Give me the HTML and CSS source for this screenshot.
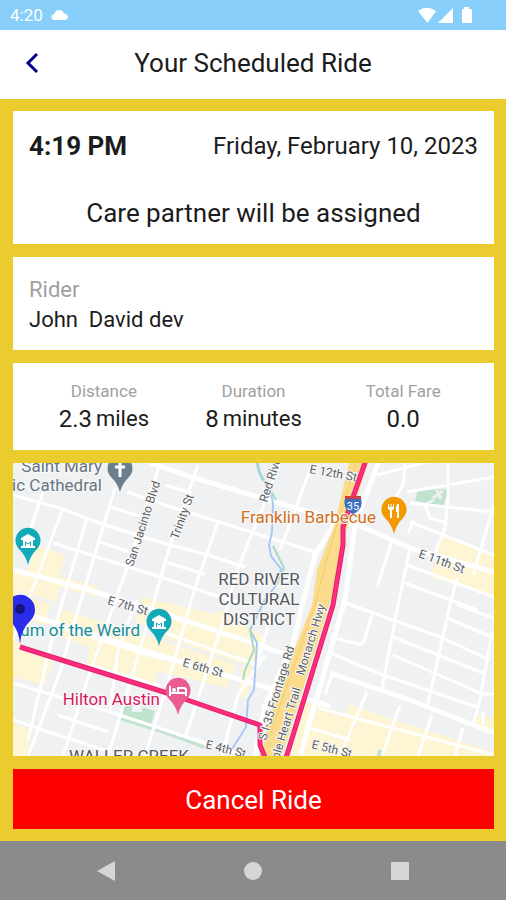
FILE: index.html
```
<!DOCTYPE html>
<html lang="en">
<head>
    <meta charset="UTF-8">
    <meta name="viewport" content="width=device-width, initial-scale=1.0">
    <title>Your Scheduled Ride</title>
    <link rel="stylesheet" href="styles.css">
</head>
<body>
    <div class="status-bar">
        <span class="clock">4:20</span>
        <svg class="cloud" width="18" height="12" viewBox="0 0 18 12" fill="#fff"><path d="M4 11C-.5 11-.6 5.600 3.200 5C4.500 0 11.500-.5 13 4.500C18.400 5 18 11 14 11Z"/></svg>
        <svg class="signals" width="56" height="18" viewBox="0 0 56 18" fill="#fff">
            <path d="M0 5Q9-1.500 18 5L9.500 17Z"/>
            <path d="M35 2V17H20Z"/>
            <path d="M46 1H51V3H53Q54 3 54 4V16Q54 17 53 17H45Q44 17 44 16V4Q44 3 45 3H46Z"/>
        </svg>
    </div>

    <header class="header">
        <button type="button" class="back" aria-label="Back">
            <svg width="16" height="22" viewBox="0 0 16 22" fill="none" stroke="#00008b" stroke-width="3"><path d="M13 2L4 11L13 20"/></svg>
        </button>
        <h1>Your Scheduled Ride</h1>
    </header>

    <main>
        <section class="card schedule">
            <div class="when">
                <strong>4:19 PM</strong>
                <span>Friday, February 10, 2023</span>
            </div>
            <p>Care partner will be assigned</p>
        </section>

        <section class="card rider">
            <h2>Rider</h2>
            <p>John  David dev</p>
        </section>

        <dl class="card stats">
            <div><dt>Distance</dt><dd><span>2.3</span><span class="unit">miles</span></dd></div>
            <div><dt>Duration</dt><dd><span>8</span><span class="unit">minutes</span></dd></div>
            <div><dt>Total Fare</dt><dd>0.0</dd></div>
        </dl>

        <section class="map">
            <svg viewBox="13 463 481 293" preserveAspectRatio="xMidYMid slice" role="img" aria-label="Route map">
                <rect x="13" y="463" width="481" height="293" fill="#eff1f3"/>

                <!-- commercial blocks -->
                <g fill="#fdf5d3">
                    <path d="M37 545L65 555L60 576L98 586L97 597L60 588L56 602L13 590V571L28 570Z"/>
                    <path d="M13 592L50 604L46 625L13 616ZM13 640L53 662L44 685L13 677ZM13 723L33 730L26 756H13Z"/>
                    <path d="M60 609L110 624L172 644L236 664L228 688L160 672L95 650L54 634Z"/>
                    <path d="M142 597L215 614L222 610L266 638L256 668L165 638L135 620Z"/>
                    <path d="M242 665L252 670L247 699L238 695ZM90 643L160 668L154 688L86 668Z"/>
                    <path d="M442 536L494 555V597L430 577ZM306 700L345 714L350 704L391 719L494 752V756H290Z"/>
                    <path d="M478 715L494 718V732L474 727Z"/>
                </g>

                <!-- parks -->
                <g fill="#bfe3cd">
                    <path d="M418 490L449 489L443 506L415 501Z"/>
                    <path d="M126 703L155 711L151 724L120 716ZM378 750H384V756H377Z"/>
                </g>
                <path d="M433 498L443 491M437 490L441 499M426 504L434 500" stroke="#eff1f3" stroke-width="3" fill="none"/>
                <path d="M132 702H142V712H132Z" fill="#eff1f3"/>
                <path d="M118 718L166 733L204 747" fill="none" stroke="#c4e3d0" stroke-width="3"/>

                <!-- streets -->
                <g fill="none" stroke="#fff" stroke-width="3">
                    <path d="M13 495L60 508L110 527L170 545L208 555L245 567"/>
                    <path d="M127 492L165 505L315 552M165 485L192 493M110 507L140 516M104 524L134 534M100 542L130 552"/>
                    <path d="M53 543L110 561L170 580L205 592L240 603M165 562L205 574"/>
                    <path d="M165 633L258 665M60 627L165 660M90 665L160 686"/>
                    <path d="M13 683L66 699L120 715L180 735L240 754M13 720L67 738L110 752M58 715L108 732"/>
                    <path d="M43 492L25 545M63 508L33 588L13 640M87 518L54 630L28 740M115 488L78 610L60 672L28 756"/>
                    <path d="M160 463L128 565L90 672L63 756M137 600L118 650L110 710M198 465L170 545L153 605L125 700L108 756"/>
                    <path d="M218 522L195 588L165 692L145 756M280 462L265 502L238 568L222 625L185 738M312 465L298 502L280 550"/>
                    <path d="M265 655L238 695L222 756M270 620L255 670"/>
                    <path d="M405 463L403 485L393 502M393 538L377 587M410 548L397 610L382 688M448 463V498L445 528L433 558"/>
                    <path d="M494 505L473 575M457 578L450 605L427 708M492 632L480 700L473 725M425 505L430 518L444 522M414 521L408 533"/>
                    <path d="M407 492L494 477M377 475L430 461M410 503L494 512M410 522L494 555M407 565L494 597M405 583L477 610"/>
                    <path d="M343 602L440 637L490 660M457 605L494 618M447 618L494 638M393 637L483 673M393 655L480 693"/>
                    <path d="M330 653L383 675L477 707M330 637L358 644Q363 645 365 638L372 615M480 694H494M483 712V724"/>
                    <path d="M318 708L494 755M310 728L350 740M367 692L340 756M400 705L382 756M432 715L418 756M463 728L455 756M332 674L325 695"/>
                </g>
                <g fill="none" stroke="#fff" stroke-width="5">
                    <path d="M150 463L195 478L275 502L363 527L410 548L494 572"/>
                    <path d="M13 570L83 588L165 614L298 658M13 610L165 657L292 695L330 706"/>
                    <path d="M20 647L167 693L258 723M330 673L410 700L494 733"/>
                    <path d="M338 518L315 555L302 605L292 648L265 705L255 756M378 463L355 525L345 600L300 756"/>
                </g>

                <!-- creek -->
                <path d="M257 463Q258 474 265 483T273 505L272 532L269 545L271 556L281 569L276 585L265 600L250 630L257 643L254 690L248 700L246 727L232 749" fill="none" stroke="#a9c9f5" stroke-width="2"/>
                <path d="M258 463Q259 475 267 484L276 500M273 546L284 568L275 587M250 630L254 650L245 670L243 680" fill="none" stroke="#a5dbc5" stroke-width="2"/>

                <!-- interstate -->
                <path d="M349 463H368L345 535L334 590L282 756H260L276 697L312 605L317 570L334 526Z" fill="#fbdc8c"/>
                <path d="M356 463L328 555L315 605L270 735" fill="none" stroke="#f4cb6c" stroke-width="1"/>

                <!-- street names -->
                <g class="street">
                    <text transform="translate(309 473) rotate(10)">E 12th St</text>
                    <text transform="translate(418 557) rotate(20)">E 11th St</text>
                    <text transform="translate(107 604) rotate(16)">E 7th St</text>
                    <text transform="translate(182 666) rotate(16)">E 6th St</text>
                    <text transform="translate(205 748) rotate(14)">E 4th St</text>
                    <text transform="translate(311 748) rotate(14)">E 5th St</text>
                    <text transform="translate(133 567) rotate(-72)">San Jacinto Blvd</text>
                    <text transform="translate(178 540) rotate(-70)">Trinity St</text>
                    <text transform="translate(267 503) rotate(-72)">Red River St</text>
                </g>

                <!-- route -->
                <path d="M20 647L167 693L260 725V745L266 760M286 758L333 605L343 545V527L352 500L366 460" fill="none" stroke="#e0246c" stroke-width="5" stroke-linejoin="round"/>
                <path d="M20 647L167 693L260 725V745L266 760M286 758L333 605L343 545V527L352 500L366 460" fill="none" stroke="#ff2b7c" stroke-width="3" stroke-linejoin="round"/>

                <g class="street">
                    <text transform="translate(266 741) rotate(-73)">S I-35 Frontage Rd</text>
                    <text transform="translate(279 760) rotate(-73)">ple Heart Trail</text>
                    <text transform="translate(304 676) rotate(-73)">Monarch Hwy</text>
                </g>

                <g class="district" text-anchor="middle">
                    <text x="259" y="585">RED RIVER</text>
                    <text x="259" y="605">CULTURAL</text>
                    <text x="259" y="625">DISTRICT</text>
                    <text x="129" y="762">WALLER CREEK</text>
                </g>

                <!-- places -->
                <g class="place" text-anchor="end">
                    <text x="102" y="472" fill="#66757f">Saint Mary</text>
                    <text x="102" y="491" fill="#66757f">ic Cathedral</text>
                    <text x="376" y="523" fill="#d2701c">Franklin Barbecue</text>
                    <text x="140" y="636" fill="#168c94">um of the Weird</text>
                    <text x="160" y="705" fill="#d81b60">Hilton Austin</text>
                </g>

                <!-- interstate shield -->
                <path d="M345 496H361V500H345Z" fill="#cf3f43"/>
                <path d="M345 499H361Q364 509 353 514Q342 509 345 499Z" fill="#3b6fc0"/>
                <text class="shield" x="353" y="510" text-anchor="middle">35</text>

                <!-- pins -->
                <g transform="translate(120 469)">
                    <path d="M0 23Q-2 15-9 8A12.500 12.500 0 1 1 9 8Q2 15 0 23Z" fill="#6b7f8c"/>
                    <path d="M0-6V8M-5-2H5" stroke="#fff" stroke-width="3"/>
                </g>
                <g transform="translate(28 541)">
                    <path d="M0 24Q-2 15-9 8A12.500 12.500 0 1 1 9 8Q2 15 0 24Z" fill="#13a9b8"/>
                    <path d="M-7-3L0-7L7-3V-1H-7ZM-5-1H5V6H-5ZM-7 5H7V7H-7Z" fill="#fff"/>
                    <path d="M-2.500 5V1L0 3L2.500 1V5" fill="none" stroke="#13a9b8" stroke-width="1"/>
                </g>
                <g transform="translate(159 622)">
                    <path d="M0 24Q-2 15-9 8A12.500 12.500 0 1 1 9 8Q2 15 0 24Z" fill="#13a9b8"/>
                    <path d="M-7-3L0-7L7-3V-1H-7ZM-5-1H5V6H-5ZM-7 5H7V7H-7Z" fill="#fff"/>
                    <path d="M-2.500 5V1L0 3L2.500 1V5" fill="none" stroke="#13a9b8" stroke-width="1"/>
                </g>
                <g transform="translate(394 510)">
                    <path d="M0 24Q-2 15-9 8A12.500 12.500 0 1 1 9 8Q2 15 0 24Z" fill="#f29900"/>
                    <path d="M-3-1V8M4 8V-6" fill="none" stroke="#fff" stroke-width="2"/>
                    <path d="M-6-6H-5V-3H-3.500V-6H-2.500V-3H-1V-6H0V-1L-3 1L-6-1ZM5-6V2H2V-3Q3-6 5-6Z" fill="#fff"/>
                </g>
                <g transform="translate(178 691)">
                    <path d="M0 24Q-2 15-9 8A12.500 12.500 0 1 1 9 8Q2 15 0 24Z" fill="#ea5c91"/>
                    <path d="M-8-5V5M-8 2H8M8 5V-1Q8-3 6-3H0V2" fill="none" stroke="#fff" stroke-width="2"/>
                    <circle cx="-4" cy="-1" r="2" fill="#fff"/>
                </g>
                <g transform="translate(20 609)">
                    <path d="M0 35Q-1 20-11 11A15 15 0 1 1 11 11Q1 20 0 35Z" fill="#2b2bea"/>
                    <circle r="5" fill="#14147c"/>
                </g>
            </svg>
        </section>

        <button type="button" class="cancel">Cancel Ride</button>
    </main>

    <nav class="nav-bar">
        <button type="button" aria-label="Back"><svg width="20" height="22" viewBox="0 0 20 22"><path d="M1 11L19 1V21Z"/></svg></button>
        <button type="button" aria-label="Home"><svg width="20" height="20" viewBox="0 0 20 20"><circle cx="10" cy="10" r="9"/></svg></button>
        <button type="button" aria-label="Recent apps"><svg width="20" height="20" viewBox="0 0 20 20"><rect x="1" y="1" width="18" height="18" rx="1"/></svg></button>
    </nav>
</body>
</html>
```
FILE: styles.css
```
* {
    box-sizing: border-box;
}
body {
    display: flex;
    flex-direction: column;
    min-height: 100vh;
    margin: 0;
    font-family: Roboto, sans-serif;
    font-size: 26px;
    line-height: 30px;
    color: #1c1c1c;
    background-color: #eacc2e;
}
h1, h2, p, dl, dd {
    margin: 0;
    font-size: inherit;
    font-weight: 400;
}
button {
    border: none;
    padding: 0;
    font: inherit;
    background: none;
    cursor: pointer;
}
svg {
    display: block;
}
.status-bar {
    display: flex;
    align-items: center;
    height: 30px;
    padding: 0 32px 0 10px;
    background-color: #87cefa;
}
.clock {
    font-size: 17px;
    color: #fff;
}
.cloud {
    margin-left: 8px;
}
.signals {
    margin-left: auto;
}
.header {
    display: grid;
    grid-template-columns: 64px 1fr 64px;
    align-items: center;
    height: 69px;
    padding-bottom: 4px;
    text-align: center;
    background-color: #fff;
}
.back {
    display: flex;
    align-items: center;
    justify-content: center;
    height: 48px;
}
main {
    display: flex;
    flex: 1;
    flex-direction: column;
    gap: 13px;
    padding: 12px 12px 12px 13px;
}
.card {
    padding: 16px;
    background-color: #fff;
}
.schedule {
    padding: 20px 16px 16px;
    text-align: center;
}
.when {
    display: flex;
    justify-content: space-between;
    margin-bottom: 37px;
}
.when strong {
    font-weight: 700;
}
.when span {
    font-size: 24px;
}
.rider {
    padding: 18px 16px 15px;
    font-size: 22px;
}
.rider p {
    white-space: pre;
}
.rider h2, .stats dt {
    color: #a0a0a0;
}
.stats {
    display: grid;
    grid-template-columns: repeat(3, 1fr);
    padding: 15px 16px 16px;
    font-size: 24px;
    text-align: center;
}
.stats dt {
    font-size: 17px;
    line-height: 26px;
}
.stats dd {
    display: flex;
    justify-content: center;
    gap: 4px;
}
.stats .unit {
    font-size: 22px;
}
.map {
    flex: 1 0 280px;
    display: flex;
    overflow: hidden;
}
.map svg {
    width: 100%;
    height: 100%;
}
.street {
    font-size: 12px;
    fill: #5d6165;
}
.street text, .district text, .place text {
    paint-order: stroke;
    stroke: #f8f9fa;
    stroke-width: 2px;
}
.district {
    font-size: 17px;
    fill: #55585c;
}
.place {
    font-size: 17px;
}
.shield {
    font-size: 11px;
    fill: #fff;
}
.cancel {
    height: 60px;
    padding-top: 2px;
    color: #fff;
    background-color: #f00;
}
.nav-bar {
    display: flex;
    align-items: center;
    justify-content: space-between;
    height: 59px;
    padding: 0 19%;
    background-color: #8b8b8b;
}
.nav-bar svg {
    fill: #d6d6d8;
}
```
